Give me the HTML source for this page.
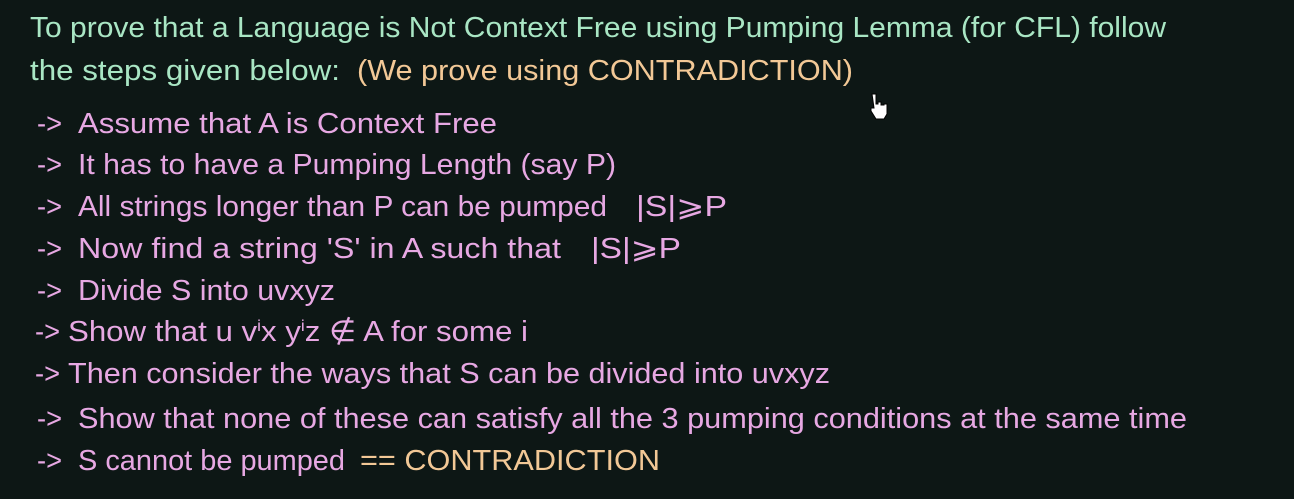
<!DOCTYPE html>
<html><head><meta charset="utf-8"><style>
html,body{margin:0;padding:0;background:#0d1715;}
svg{display:block}
text{font-family:"Liberation Sans",sans-serif;font-size:29px}
.g{fill:#a9e6c4}.p{fill:#e7a8e3}.o{fill:#f2c896}
</style></head><body>
<svg width="1294" height="499" viewBox="0 0 1294 499">
<rect width="1294" height="499" fill="#0d1715"/>
<text class="g" x="30" y="37" textLength="1136" lengthAdjust="spacingAndGlyphs">To prove that a Language is Not Context Free using Pumping Lemma (for CFL) follow</text>
<text class="g" x="30" y="80" textLength="310" lengthAdjust="spacingAndGlyphs">the steps given below:</text>
<text class="o" x="357" y="80" textLength="496" lengthAdjust="spacingAndGlyphs">(We prove using CONTRADICTION)</text>

<g class="p">
<text x="37" y="133" textLength="25" lengthAdjust="spacingAndGlyphs">-&gt;</text>
<text x="78" y="133" textLength="419" lengthAdjust="spacingAndGlyphs">Assume that A is Context Free</text>
<text x="37" y="174" textLength="25" lengthAdjust="spacingAndGlyphs">-&gt;</text>
<text x="78" y="174" textLength="538" lengthAdjust="spacingAndGlyphs">It has to have a Pumping Length  (say P)</text>
<text x="37" y="216" textLength="25" lengthAdjust="spacingAndGlyphs">-&gt;</text>
<text x="78" y="216" textLength="529" lengthAdjust="spacingAndGlyphs">All strings longer than P can be pumped</text>
<text x="636" y="216" textLength="91" lengthAdjust="spacingAndGlyphs">|S|⩾P</text>
<text x="37" y="258" textLength="25" lengthAdjust="spacingAndGlyphs">-&gt;</text>
<text x="78" y="258" textLength="483" lengthAdjust="spacingAndGlyphs">Now find a string 'S' in A such that</text>
<text x="591" y="258" textLength="90" lengthAdjust="spacingAndGlyphs">|S|⩾P</text>
<text x="37" y="300" textLength="25" lengthAdjust="spacingAndGlyphs">-&gt;</text>
<text x="78" y="300" textLength="257" lengthAdjust="spacingAndGlyphs">Divide S into uvxyz</text>
<text x="35" y="341" textLength="25" lengthAdjust="spacingAndGlyphs">-&gt;</text>
<text x="68" y="341" textLength="460" lengthAdjust="spacingAndGlyphs">Show that u v<tspan font-size="16" dy="-10">i</tspan><tspan dy="10">x y</tspan><tspan font-size="16" dy="-10">i</tspan><tspan dy="10">z ∉ A for some i</tspan></text>
<text x="35" y="383" textLength="25" lengthAdjust="spacingAndGlyphs">-&gt;</text>
<text x="68" y="383" textLength="762" lengthAdjust="spacingAndGlyphs">Then consider the ways that S can be divided into uvxyz</text>
<text x="37" y="428" textLength="25" lengthAdjust="spacingAndGlyphs">-&gt;</text>
<text x="78" y="428" textLength="1109" lengthAdjust="spacingAndGlyphs">Show that none of these can satisfy all the 3 pumping conditions at the same time</text>
<text x="37" y="470" textLength="25" lengthAdjust="spacingAndGlyphs">-&gt;</text>
<text x="78" y="470" textLength="267" lengthAdjust="spacingAndGlyphs">S cannot be pumped</text>
</g>
<text class="o" x="360" y="470" textLength="300" lengthAdjust="spacingAndGlyphs">== CONTRADICTION</text>
<path d="M872 94 h4 v10 h2 v-2 h3 v3 h3 v-1 h3 v10 l-3 5 h-8 l-5 -8 v-3 h3 z" fill="#fff" stroke="#000" stroke-width="1"/>
</svg>
</body></html>
